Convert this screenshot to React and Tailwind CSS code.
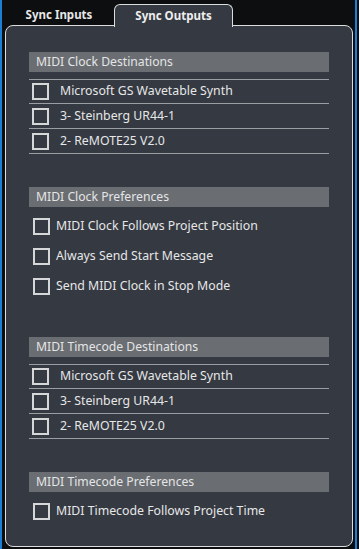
import React from "react";

const clockDestinations = [
  "Microsoft GS Wavetable Synth",
  "3- Steinberg UR44-1",
  "2- ReMOTE25 V2.0",
];

const clockPrefs = [
  "MIDI Clock Follows Project Position",
  "Always Send Start Message",
  "Send MIDI Clock in Stop Mode",
];

const Box = () => (
  <span className="block w-[17px] h-[17px] border-2 border-[#d6d7d8] shrink-0" />
);

const Header = ({ title }) => (
  <div className="h-[20px] bg-[#6a6d72] text-[#e4e5e6] text-[12.2px] leading-[20px] pl-[7px]">
    {title}
  </div>
);

const DestinationList = ({ items }) => (
  <div className="mt-[7px] border-t border-[#9a9da2]">
    {items.map((item, i) => (
      <div
        key={item}
        className={`${i === 0 ? "h-[24px]" : "h-[25px]"} border-b border-[#9a9da2] flex items-center pl-[3px]`}
      >
        <Box />
        <span className="ml-[11px] text-[12.3px] text-[#e6e7e8]">{item}</span>
      </div>
    ))}
  </div>
);

const PrefList = ({ items }) => (
  <div className="mt-[4px]">
    {items.map((item) => (
      <div key={item} className="h-[30px] flex items-center pl-[4px]">
        <Box />
        <span className="ml-[6px] text-[12.3px] text-[#e6e7e8]">{item}</span>
      </div>
    ))}
  </div>
);

export default function App() {
  return (
    <div
      className="w-[359px] h-[549px] bg-[#0d0e10] overflow-hidden"
      style={{ fontFamily: '"Noto Sans", "Liberation Sans", sans-serif' }}
    >
      <div className="w-[357px] h-[549px] border-l-2 border-r-2 border-[#1b7fd6]">
        {/* tabs */}
        <div className="h-[26px] flex items-end relative z-10">
          <div className="w-[112px] h-[23px] flex items-center justify-center text-[11.5px] font-bold text-[#e6e7e8] pl-[2px]">
            Sync Inputs
          </div>
          <div className="w-[119px] h-[23px] -mb-px bg-[#353941] border border-b-0 border-[#dcdddf] rounded-t-[6px] flex items-center justify-center text-[11.5px] font-bold text-[#eeeeef]">
            Sync Outputs
          </div>
        </div>

        {/* panel */}
        <div className="ml-[3px] w-[348px] h-[522px] -mt-px bg-[#353941] border border-[#dcdddf] rounded-[8px] pt-[26px] px-[23px]">
          <Header title="MIDI Clock Destinations" />
          <DestinationList items={clockDestinations} />

          <div className="mt-[33px]">
            <Header title="MIDI Clock Preferences" />
            <PrefList items={clockPrefs} />
          </div>

          <div className="mt-[36px]">
            <Header title="MIDI Timecode Destinations" />
            <DestinationList items={clockDestinations} />
          </div>

          <div className="mt-[33px]">
            <Header title="MIDI Timecode Preferences" />
            <PrefList items={["MIDI Timecode Follows Project Time"]} />
          </div>
        </div>
      </div>
    </div>
  );
}
